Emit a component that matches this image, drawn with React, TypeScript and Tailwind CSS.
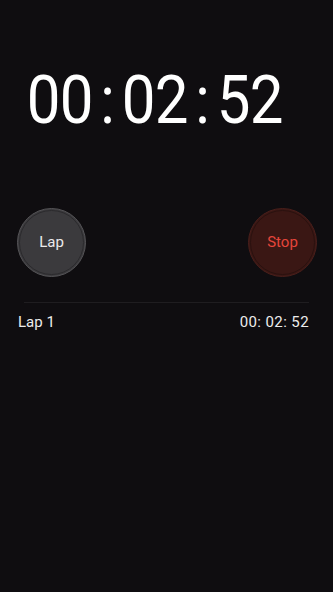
const laps = [{ name: 'Lap 1', time: '00: 02: 52' }];
const clock = ['0', '0', ':', '0', '2', ':', '5', '2'];

export default function App() {
  return (
    <div
      className="w-[333px] h-[592px] bg-[#0f0d10] text-white overflow-hidden"
      style={{ fontFamily: 'Roboto, "Liberation Sans", sans-serif' }}
    >
      {/* big readout */}
      <div className="pt-[63px] pl-[27px] h-[140px]">
        <div className="flex text-[60px] leading-[76px] text-white scale-y-110">
          {clock.map((c, i) => (
            <span key={i} className={c === ':' ? 'w-[29px] flex justify-center' : 'w-[33px] flex justify-center'}>
              {c}
            </span>
          ))}
        </div>
      </div>

      <div className="mt-[68px] flex justify-between pl-[17px] pr-[16px]">
        <button className="w-[69px] h-[69px] rounded-full bg-[#3b3a3d] border border-[#555457] flex items-center justify-center">
          <span className="w-[65px] h-[65px] rounded-full border border-[#2b2a2d] flex items-center justify-center text-[15px] text-[#ebebeb]">
            Lap
          </span>
        </button>
        <button className="w-[69px] h-[69px] rounded-full bg-[#3a1714] border border-[#4a1f1b] flex items-center justify-center">
          <span className="w-[65px] h-[65px] rounded-full border border-[#2a110f] flex items-center justify-center text-[15px] text-[#e5453b]">
            Stop
          </span>
        </button>
      </div>

      <div className="mt-[25px] mx-[24px] h-px bg-[#1f1d20]" />

      <div className="pl-[18px] pr-[24px] pt-[8px]">
        {laps.map((l) => (
          <div key={l.name} className="flex justify-between items-center text-[15px] leading-[22px] text-[#ececec]">
            <span>{l.name}</span>
            <span className="tracking-[0.4px]">{l.time}</span>
          </div>
        ))}
      </div>
    </div>
  );
}
